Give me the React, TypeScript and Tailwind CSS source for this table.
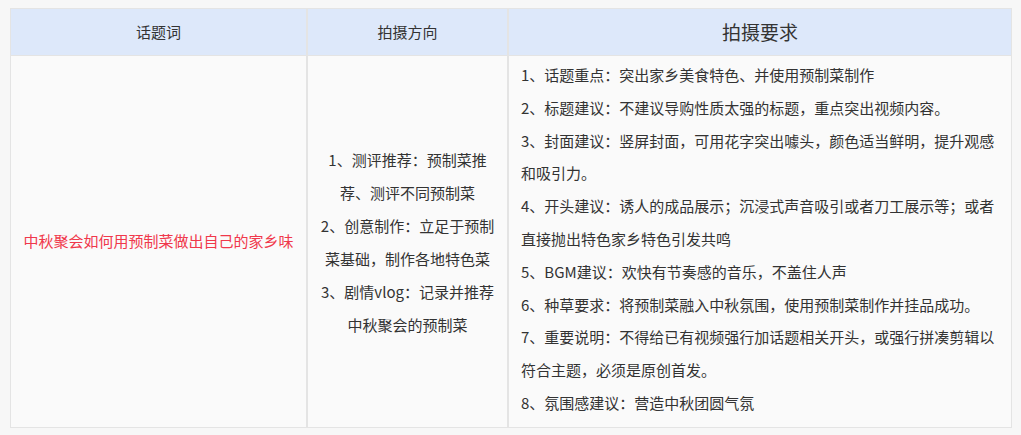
const directions = [
  '1、测评推荐：预制菜推荐、测评不同预制菜',
  '2、创意制作：立足于预制菜基础，制作各地特色菜',
  '3、剧情vlog：记录并推荐中秋聚会的预制菜',
];

const requirements = [
  '1、话题重点：突出家乡美食特色、并使用预制菜制作',
  '2、标题建议：不建议导购性质太强的标题，重点突出视频内容。',
  '3、封面建议：竖屏封面，可用花字突出噱头，颜色适当鲜明，提升观感和吸引力。',
  '4、开头建议：诱人的成品展示；沉浸式声音吸引或者刀工展示等；或者直接抛出特色家乡特色引发共鸣',
  '5、BGM建议：欢快有节奏感的音乐，不盖住人声',
  '6、种草要求：将预制菜融入中秋氛围，使用预制菜制作并挂品成功。',
  '7、重要说明：不得给已有视频强行加话题相关开头，或强行拼凑剪辑以符合主题，必须是原创首发。',
  '8、氛围感建议：营造中秋团圆气氛',
];

export default function App() {
  return (
    <div className="w-full h-[435px] bg-[#f7f7f7] pt-[8px] pl-[10px] font-['Noto_Sans_CJK_SC','Liberation_Sans',sans-serif] text-[#333333]">
      <div className="w-[1002px] grid grid-cols-[295px_199px_1fr] grid-rows-[46px_371px] gap-x-[2px] gap-y-[1px] bg-[#e4e4e4] border border-[#e4e4e4]">
        {/* header */}
        <div className="bg-[#dde8fa] flex items-center justify-center text-[15px]">话题词</div>
        <div className="bg-[#dde8fa] flex items-center justify-center text-[15px]">拍摄方向</div>
        <div className="bg-[#dde8fa] flex items-center justify-center text-[19px]">拍摄要求</div>

        {/* body */}
        <div className="bg-[#fafafa] flex items-center justify-center px-3 text-[15px] text-[#f0384b]">
          中秋聚会如何用预制菜做出自己的家乡味
        </div>
        <div className="bg-[#fafafa] flex flex-col justify-center px-[10px] text-[15px] leading-[33px] text-center">
          {directions.map((d) => (
            <p key={d}>{d}</p>
          ))}
        </div>
        <div className="bg-[#fafafa] px-3 pt-[3px] text-[15px] leading-[32.8px]">
          {requirements.map((r) => (
            <p key={r}>{r}</p>
          ))}
        </div>
      </div>
    </div>
  );
}
